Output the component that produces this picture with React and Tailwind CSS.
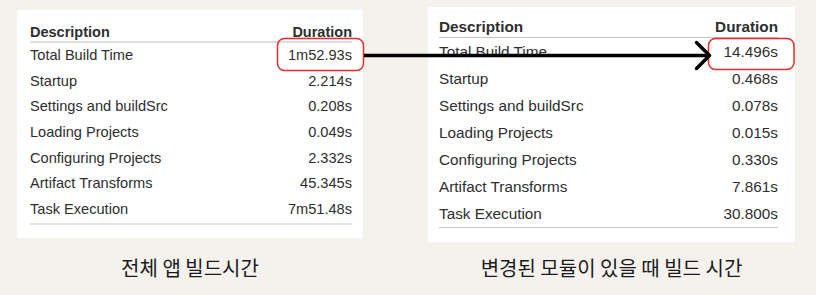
import React from "react";

const left = [
  ["Total Build Time", "1m52.93s"],
  ["Startup", "2.214s"],
  ["Settings and buildSrc", "0.208s"],
  ["Loading Projects", "0.049s"],
  ["Configuring Projects", "2.332s"],
  ["Artifact Transforms", "45.345s"],
  ["Task Execution", "7m51.48s"],
];

const right = [
  ["Total Build Time", "14.496s"],
  ["Startup", "0.468s"],
  ["Settings and buildSrc", "0.078s"],
  ["Loading Projects", "0.015s"],
  ["Configuring Projects", "0.330s"],
  ["Artifact Transforms", "7.861s"],
  ["Task Execution", "30.800s"],
];

const sans = { fontFamily: '"Liberation Sans", Arial, sans-serif' };
const kr = { fontFamily: '"Noto Sans CJK KR", "Noto Sans", sans-serif' };

export default function App() {
  return (
    <div className="relative w-[816px] h-[295px] bg-[#f5f1ed] overflow-hidden flex items-start" style={sans}>
      {/* Left column */}
      <div className="ml-[17px] w-[346px] flex flex-col items-center">
        <div className="mt-[10px] w-full bg-white pl-[13px] pr-[11px] pt-[13px] pb-[13px] text-[#2e2e2e]">
          <div className="flex justify-between h-[18px] leading-[18px] text-[14.5px] font-bold border-b-2 border-[#dedede] box-content">
            <span>Description</span>
            <span>Duration</span>
          </div>
          <div className="border-b-2 border-[#e2e2e2]">
            {left.map(([d, v]) => (
              <div key={d} className="flex justify-between h-[25.7px] leading-[25.7px] text-[14.6px]">
                <span>{d}</span>
                <span>{v}</span>
              </div>
            ))}
          </div>
        </div>
        <div className="mt-[17px] text-[20px] leading-[26px] text-[#1a1a1a]" style={kr}>
          전체 앱 빌드시간
        </div>
      </div>

      {/* Right column */}
      <div className="ml-[65px] w-[367px] flex flex-col items-center">
        <div className="mt-[7px] w-full bg-white pl-[11px] pr-[17px] pt-[10px] pb-[14px] text-[#2e2e2e]">
          <div className="flex justify-between h-[20px] leading-[20px] text-[15.3px] font-bold border-b border-[#c4c4c4] box-content">
            <span>Description</span>
            <span>Duration</span>
          </div>
          <div className="border-b border-[#c4c4c4]">
            {right.map(([d, v]) => (
              <div key={d} className="flex justify-between h-[27px] leading-[27px] text-[15.3px]">
                <span>{d}</span>
                <span>{v}</span>
              </div>
            ))}
          </div>
        </div>
        <div className="mt-[13px] text-[20px] leading-[26px] text-[#1a1a1a]" style={kr}>
          변경된 모듈이 있을 때 빌드 시간
        </div>
      </div>

      {/* Annotation overlay */}
      <svg className="absolute left-0 top-0 pointer-events-none" width="816" height="295" viewBox="0 0 816 295">
        <rect x="277.5" y="38.5" width="86" height="32" rx="7" fill="none" stroke="#ea2a2a" strokeWidth="1.5" />
        <rect x="708.5" y="38.5" width="85.5" height="31" rx="7" fill="none" stroke="#ea2a2a" strokeWidth="1.5" />
        <line x1="364" y1="55.5" x2="709" y2="55.5" stroke="#000" strokeWidth="3.5" />
        <polyline points="696.5,42.5 709.5,55.5 696.5,68.5" fill="none" stroke="#000" strokeWidth="3.5" strokeLinecap="round" strokeLinejoin="round" />
      </svg>
    </div>
  );
}
